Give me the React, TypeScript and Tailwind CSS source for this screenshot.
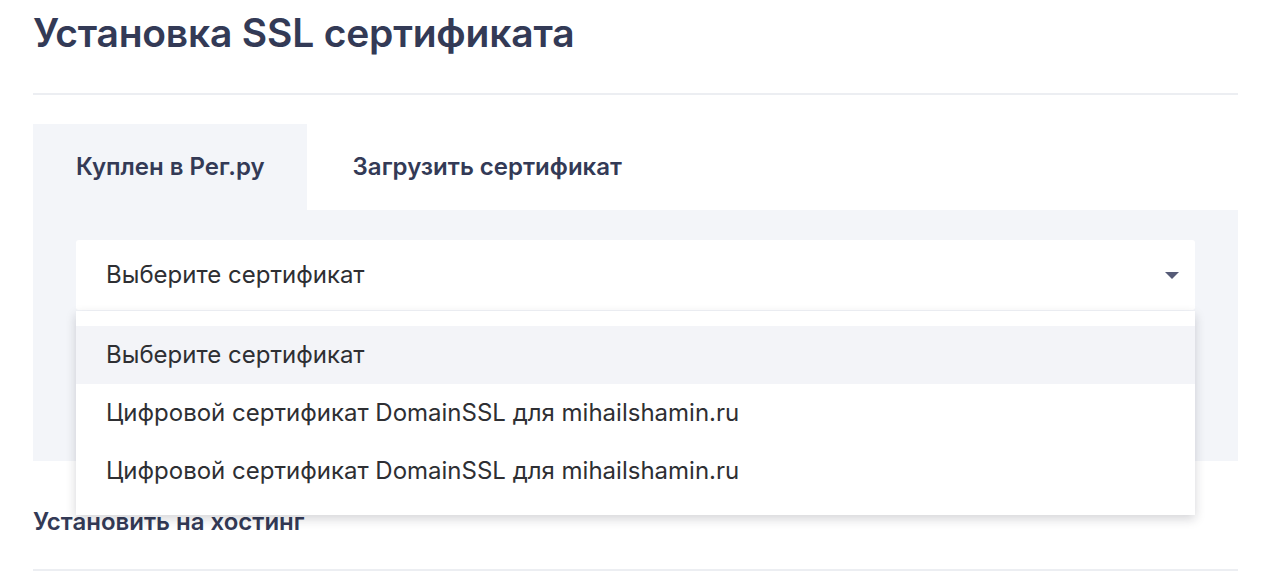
import { useState } from "react";

const OPTIONS = [
  "Выберите сертификат",
  "Цифровой сертификат DomainSSL для mihailshamin.ru",
  "Цифровой сертификат DomainSSL для mihailshamin.ru",
];

function Caret() {
  return (
    <svg width="14" height="7" viewBox="0 0 14 7" className="shrink-0">
      <path d="M0 0h14L7 7z" fill="#565b77" />
    </svg>
  );
}

export default function App() {
  const [tab, setTab] = useState(0);
  const [active, setActive] = useState(0);

  return (
    <div className="min-h-[572px] bg-white pl-[33px] pr-[42px] pt-[9px] font-['Inter',sans-serif] text-[#333a56]">
      <h1 className="text-[39px] font-semibold leading-[48px] tracking-[-0.2px]">Установка SSL сертификата</h1>
      <div className="mt-[36px] h-[2px] bg-[#eceef2]" />

      {/* tabs */}
      <div className="mt-[29px] flex">
        {["Куплен в Рег.ру", "Загрузить сертификат"].map((t, i) => (
          <button
            key={t}
            type="button"
            onClick={() => setTab(i)}
            className={
              "h-[86px] pl-[43px] pr-[42px] text-[24px] font-semibold " +
              (i === 1 ? "pl-[46px] " : "") +
              (tab === i ? "bg-[#f3f5f9]" : "bg-white")
            }
          >
            {t}
          </button>
        ))}
      </div>

      <div className="h-[251px] bg-[#f3f5f9] px-[43px] pt-[30px]">
        <div className="relative">
          <div className="flex h-[70px] items-center justify-between rounded-[3px] bg-white pl-[30px] pr-[16px] text-[24px] text-[#2e2f33]">
            <span>Выберите сертификат</span>
            <Caret />
          </div>
          <ul className="absolute left-0 right-0 top-[71px] z-10 bg-white py-[15px] text-[24px] text-[#2e2f33] shadow-[0_4px_10px_rgba(20,24,40,0.18)]">
            {OPTIONS.map((o, i) => (
              <li
                key={i}
                onMouseEnter={() => setActive(i)}
                className={
                  "flex h-[58px] items-center pl-[30px] " + (active === i ? "bg-[#f3f4f8]" : "")
                }
              >
                {o}
              </li>
            ))}
          </ul>
        </div>
      </div>

      <div className="pt-[48px] text-[24px] font-semibold leading-[26px]">Установить на хостинг</div>
      <div className="mt-[34px] h-[2px] bg-[#eceef2]" />
    </div>
  );
}
